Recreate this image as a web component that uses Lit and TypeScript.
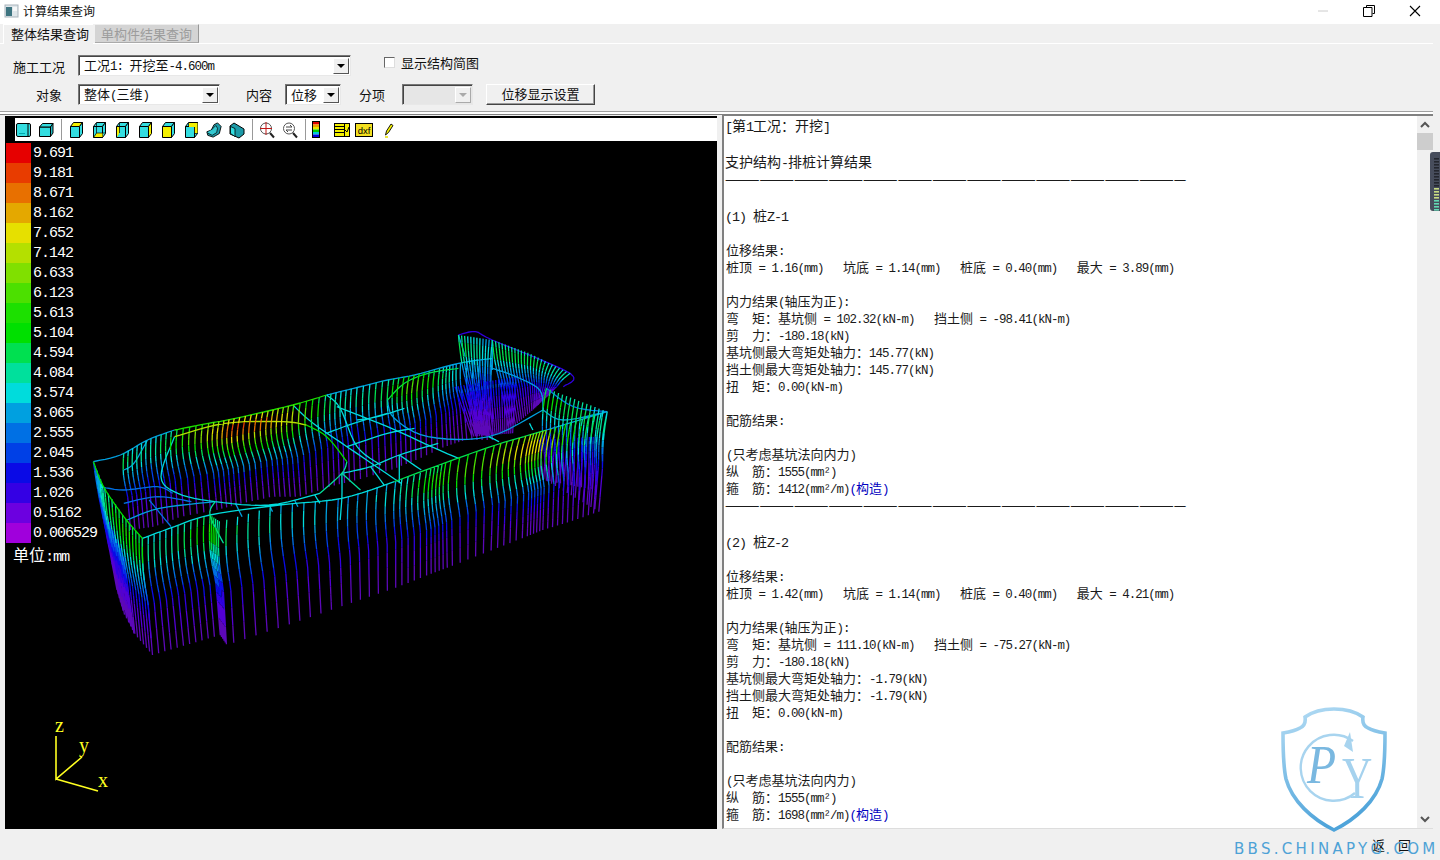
import { LitElement, html, svg, css } from "lit";
import { customElement } from "lit/decorators.js";

const RAMP = ["#a000dc", "#6c00e0", "#3400e4", "#0a0ae6", "#0040e6", "#0070e4", "#00a0e0", "#00dcdc", "#00e09c", "#00e050", "#00e000", "#1ce000", "#4ce000", "#80e000", "#b4e000", "#e6e000", "#e4a800", "#e87000", "#e83c00", "#e60000"];
// the model's thin lines read darker at the low end than the legend swatches
const WIRE_RAMP = ["#5c08b8", "#5200d4", "#3000e0", ...RAMP.slice(3)];
const LEGEND = ["9.691", "9.181", "8.671", "8.162", "7.652", "7.142", "6.633", "6.123", "5.613", "5.104", "4.594", "4.084", "3.574", "3.065", "2.555", "2.045", "1.536", "1.026", "0.5162", "0.006529"];

// coordinates below were read off the screenshot crop of the model
const X = (x: number) => 90 + x / 2.958;
const Y = (y: number) => 330 + y / 3;

type Station = [number, number, number, number, number];

const WALLS: { n: number; bulge: number; st: Station[] }[] = [
  // near long wall
  { n: 72, bulge: 15, st: [[155, 625, 185, 975, .42], [250, 590, 285, 945, .48], [355, 555, 385, 915, .6], [385, 575, 405, 945, .5], [560, 525, 585, 885, .42], [745, 505, 755, 825, .34], [900, 455, 900, 775, .38], [1000, 420, 1000, 735, .58], [1060, 395, 1065, 710, .62], [1200, 345, 1190, 660, .72], [1300, 315, 1290, 620, .88], [1350, 300, 1340, 600, .82], [1430, 275, 1420, 575, .56], [1530, 245, 1505, 545, .46]] },
  // far long wall
  { n: 70, bulge: 13, st: [[100, 370, 120, 600, .5], [170, 330, 190, 590, .42], [250, 300, 270, 560, .56], [350, 280, 375, 540, .78], [430, 265, 450, 520, 1], [520, 245, 540, 500, .95], [600, 225, 620, 500, .8], [700, 195, 710, 470, .5], [780, 175, 790, 450, .42], [880, 150, 890, 420, .52], [960, 135, 965, 390, .7], [1040, 115, 1050, 350, .5], [1090, 100, 1110, 330, .36], [1190, 85, 1190, 330, .32]] },
  // left end
  { n: 18, bulge: 10, st: [[10, 395, 80, 780, .28], [40, 470, 100, 850, .5], [100, 560, 135, 915, .6], [155, 625, 185, 975, .56]] },
  { n: 14, bulge: 3, st: [[30, 510, 80, 780, .22], [100, 680, 130, 910, .22]] },
  // raised notch at the far end
  { n: 12, bulge: 8, st: [[1090, 15, 1140, 310, .52], [1190, 30, 1180, 320, .38]] },
  { n: 24, bulge: 8, st: [[1190, 30, 1240, 300, .5], [1300, 70, 1310, 240, .5], [1420, 130, 1350, 200, .44]] },
  { n: 22, bulge: 2, st: [[1080, 170, 1130, 320, .2], [1260, 140, 1250, 310, .2]] },
  // right end
  { n: 16, bulge: 9, st: [[1350, 175, 1330, 440, .56], [1530, 245, 1505, 545, .46]] },
  { n: 16, bulge: 2, st: [[1330, 330, 1340, 450, .2], [1500, 320, 1495, 480, .2]] },
];

const CURVES: [number, number[][]][] = [
  // near top edge
  [.38, [[155, 625], [250, 590], [355, 555], [560, 525], [745, 505], [900, 455]]],
  [.45, [[900, 455], [1060, 395], [1200, 345], [1350, 300]]],
  [.3, [[1350, 300], [1530, 245]]],
  // far top edge
  [.3, [[10, 395], [90, 375], [170, 330], [250, 300]]],
  [.58, [[250, 300], [350, 280], [430, 265], [600, 225], [700, 195]]],
  [.34, [[700, 195], [780, 175], [880, 150], [960, 135], [1090, 100], [1190, 85]]],
  // first ring
  [.72, [[250, 320], [400, 280], [570, 275], [640, 285]]],
  [.5, [[640, 285], [700, 320], [760, 395]]],
  [.44, [[760, 395], [745, 430], [680, 490]]],
  [.36, [[680, 490], [530, 525], [370, 515], [260, 490], [210, 440], [250, 320]]],
  // second ring
  [.34, [[880, 210], [900, 265], [1000, 320], [1180, 320], [1340, 240]]],
  [.48, [[880, 210], [930, 160], [1000, 130], [1090, 115]]],
  [.34, [[1340, 240], [1330, 180], [1260, 140], [1190, 115]]],
  // slab grid
  [.38, [[600, 225], [660, 280], [760, 350], [920, 460]]],
  [.36, [[730, 230], [880, 290], [1010, 350], [1090, 385]]],
  [.38, [[700, 310], [780, 280], [880, 250]]],
  [.38, [[760, 350], [880, 310], [960, 295]]],
  [.38, [[745, 430], [830, 410], [915, 375], [1030, 340]]],
  [.42, [[745, 430], [800, 480]]],
  [.37, [[830, 410], [870, 465]]],
  [.38, [[915, 375], [915, 460]]],
  [.36, [[915, 375], [980, 420]]],
  [.37, [[700, 195], [740, 235], [790, 350], [860, 405]]],
  [.36, [[790, 270], [850, 260], [930, 235]]],
  [.38, [[745, 430], [745, 500], [740, 570]]],
  [.24, [[30, 470], [100, 480], [200, 470], [245, 490]]],
  [.24, [[100, 520], [200, 500], [300, 515]]],
  [.3, [[110, 570], [205, 535], [370, 515]]],
  [.26, [[175, 510], [240, 590]]],
  [.4, [[370, 515], [355, 555], [395, 640]]],
  [.3, [[430, 520], [450, 560]]],
  [.3, [[530, 525], [540, 545]]],
  [.34, [[605, 510], [615, 530]]],
  [.36, [[665, 495], [680, 520]]],
  [.36, [[1180, 320], [1210, 335]]],
  [.36, [[1300, 280], [1310, 300]]],
  [.34, [[1340, 240], [1400, 270], [1530, 245]]],
  [.28, [[1350, 175], [1430, 230], [1530, 245]]],
  [.52, [[10, 395], [40, 470], [100, 560], [155, 625]]],
  [.34, [[100, 420], [130, 400], [170, 330]]],
  // notch outline
  [.1, [[1090, 15], [1140, 5], [1190, 30], [1420, 130], [1400, 170]]],
  [.3, [[1190, 30], [1190, 120]]],
  [.34, [[1090, 15], [1110, 80]]],
];

function bucket(v: number) {
  return Math.max(0, Math.min(RAMP.length - 1, Math.round(v * (RAMP.length - 1))));
}

function buildWire() {
  const paths: string[] = RAMP.map(() => "");
  const seg = (v: number, x1: number, y1: number, x2: number, y2: number) => {
    paths[bucket(v)] += `M${X(x1).toFixed(1)} ${Y(y1).toFixed(1)}L${X(x2).toFixed(1)} ${Y(y2).toFixed(1)}`;
  };
  for (const w of WALLS) {
    for (let i = 0; i < w.n; i++) {
      const f = (i / (w.n - 1)) * (w.st.length - 1);
      const k = Math.min(Math.floor(f), w.st.length - 2);
      const u = f - k;
      const a = w.st[k].map((val, j) => val + (w.st[k + 1][j] - val) * u);
      const steps = 14;
      let px = a[0];
      let py = a[1];
      for (let s = 1; s <= steps; s++) {
        const t = s / steps;
        const off = -w.bulge * a[4] * Math.sin(Math.PI * Math.min(t / 0.55, 1));
        const x = a[0] + (a[2] - a[0]) * t + off;
        const y = a[1] + (a[3] - a[1]) * t;
        const mid = t - 0.5 / steps;
        const v = mid < 0.14 ? a[4] * (0.75 + (0.25 * mid) / 0.14) : a[4] * Math.pow(1 - (mid - 0.14) / 0.86, 1.8);
        seg(v, px, py, x, y);
        px = x;
        py = y;
      }
    }
  }
  for (const [v, pts] of CURVES) {
    for (let i = 0; i < pts.length - 1; i++) {
      const p0 = pts[Math.max(i - 1, 0)];
      const p1 = pts[i];
      const p2 = pts[i + 1];
      const p3 = pts[Math.min(i + 2, pts.length - 1)];
      let lx = p1[0];
      let ly = p1[1];
      for (let s = 1; s <= 6; s++) {
        const t = s / 6;
        const cr = (a: number, b: number, c: number, d: number) =>
          0.5 * (2 * b + (c - a) * t + (2 * a - 5 * b + 4 * c - d) * t * t + (3 * b - a - 3 * c + d) * t * t * t);
        const x = cr(p0[0], p1[0], p2[0], p3[0]);
        const y = cr(p0[1], p1[1], p2[1], p3[1]);
        seg(v, lx, ly, x, y);
        lx = x;
        ly = y;
      }
    }
  }
  return paths;
}

const WIRE = buildWire();

const CY = "#33dde0";
const YL = "#f4f000";

// front / top / side faces of a small cube
function cube(front = CY, top = CY, side = CY, extra = svg``) {
  return svg`<svg class="ic" width="16" height="18" viewBox="0 0 16 18">
    <path d="M2.5 5.5h9v11h-9z" fill="${front}" stroke="#000"/>
    <path d="M2.5 5.5l3-4h9l-3 4z" fill="${top}" stroke="#000"/>
    <path d="M11.5 5.5l3-4v11l-3 4z" fill="${side}" stroke="#000"/>
    ${extra}
  </svg>`;
}

const ICON_GROUPS = [
  [
    svg`<svg class="ic" width="16" height="18" viewBox="0 0 16 18"><rect x="1.5" y="2.5" width="14" height="13" rx="1.5" fill="${CY}" stroke="#000"/><path d="M13 3v12" stroke="#000"/><path d="M4 12.5h6" stroke="#0aa"/></svg>`,
    svg`<svg class="ic" width="16" height="18" viewBox="0 0 16 18"><path d="M1.5 6h11v9.5h-11z" fill="${CY}" stroke="#000"/><path d="M1.5 6l3-3.5h10.5l-2.5 3.5z" fill="${CY}" stroke="#000"/><path d="M12.5 6l2.5-3.5v9.5l-2.5 3.5z" fill="#22b8c0" stroke="#000"/></svg>`,
  ],
  [
    cube(CY, YL, CY),
    cube(CY, CY, CY, svg`<path d="M3 16l3-4h5.5v4z" fill="${YL}"/><path d="M5.5 2v10h9M5.5 12l-3 4.5" stroke="#000" fill="none" stroke-width=".7"/>`),
    cube(CY, CY, CY, svg`<path d="M3 6h2.5v6l-2.5 4z" fill="${YL}"/><path d="M5.5 2v10" stroke="#000" stroke-width=".7"/>`),
    cube(CY, CY, YL),
    cube(YL, CY, CY),
    cube(CY, CY, CY, svg`<path d="M6 2h8.5v10h-3v-6h-5.5z" fill="${YL}"/><path d="M5.5 2v4M11.5 6v6.5h3" stroke="#000" fill="none" stroke-width=".7"/>`),
    svg`<svg class="ic" width="16" height="18" viewBox="0 0 18 18"><path d="M1 11l5-2 3-6 4-2 4 4-2 8-7 4-6-2z" fill="#1c9aa8" stroke="#000"/><path d="M6 9l5-5 2 3-1 5-5 3-6-3" fill="#33c8d0" stroke="#000" stroke-width=".8"/></svg>`,
    svg`<svg class="ic" width="16" height="18" viewBox="0 0 16 18"><path d="M1 5l4-3 10 6v5l-5 4-9-4z" fill="#1c9aa8" stroke="#000"/><path d="M1.5 5.5l4.5 2v8l-4.5-3z" fill="${CY}" stroke="#000" stroke-width=".8"/></svg>`,
  ],
  [
    svg`<svg class="ic" width="16" height="18" viewBox="0 0 16 18"><circle cx="7" cy="7.5" r="5.5" fill="#fff" stroke="#555"/><path d="M7 1v13M1 7.5h12" stroke="#c01818"/><path d="M11 12l4 4.5" stroke="#222" stroke-width="2"/></svg>`,
    svg`<svg class="ic" width="16" height="18" viewBox="0 0 16 18"><circle cx="7" cy="7.5" r="5.5" fill="#fff" stroke="#555"/><path d="M4 6h6l-2-2M10 9H4l2 2" stroke="#444" fill="none"/><path d="M11 12l4 4.5" stroke="#222" stroke-width="2"/></svg>`,
  ],
];

const BAR_COLORS = ["#e00000", "#f0a000", "#e8e800", "#00d000", "#00c8e0", "#0000e0"];

type Line = { k: string; t?: string; tail?: string };

const RULE = "—".repeat(40);

function pile(no: number, d: string[], m: string[], shear: string, ax: string, stir: string): Line[] {
  return [
    { k: "big", t: `(${no}) 桩Z-${no}` },
    { k: "blank" },
    { k: "sm", t: "位移结果:" },
    { k: "sm", t: `桩顶 = ${d[0]}(mm)   坑底 = ${d[1]}(mm)   桩底 = ${d[2]}(mm)   最大 = ${d[3]}(mm)` },
    { k: "blank" },
    { k: "sm", t: "内力结果(轴压为正):" },
    { k: "sm", t: `弯  矩：基坑侧 = ${m[0]}(kN-m)   挡土侧 = ${m[1]}(kN-m)` },
    { k: "sm", t: `剪  力：${shear}(kN)` },
    { k: "sm", t: `基坑侧最大弯矩处轴力：${ax}(kN)` },
    { k: "sm", t: `挡土侧最大弯矩处轴力：${ax}(kN)` },
    { k: "sm", t: "扭  矩：0.00(kN-m)" },
    { k: "blank" },
    { k: "sm", t: "配筋结果:" },
    { k: "blank" },
    { k: "sm", t: "(只考虑基坑法向内力)" },
    { k: "sm", t: "纵  筋：1555(mm²)" },
    { k: "sm", t: `箍  筋：${stir}(mm²/m)`, tail: "(构造)" },
  ];
}

const LINES: Line[] = [
  { k: "big", t: "[第1工况：开挖]" },
  { k: "blank18" },
  { k: "big", t: "支护结构-排桩计算结果" },
  { k: "rule", t: RULE },
  { k: "blank19" },
  ...pile(1, ["1.16", "1.14", "0.40", "3.89"], ["102.32", "-98.41"], "-180.18", "145.77", "1412"),
  { k: "rule", t: RULE },
  { k: "blank19" },
  ...pile(2, ["1.42", "1.14", "0.40", "4.21"], ["111.10", "-75.27"], "-180.18", "-1.79", "1698"),
];

// latin runs are half the CJK width, as in the bitmap font of the original
function mixed(s: string) {
  return s.split(/([\x20-\x7e²]+)/).map((part, i) => (i % 2 ? html`<span class="l">${part}</span>` : part));
}

@customElement("app-root")
export class AppRoot extends LitElement {
  static styles = css`
    :host {
      display: block;
      position: relative;
      width: 1440px;
      height: 860px;
      overflow: hidden;
      background: #f0f0f0;
      font-family: "Noto Sans CJK SC", "Liberation Sans", sans-serif;
      font-size: 13px;
      color: #111;
    }
    .l {
      font-family: "Liberation Mono", monospace;
      font-size: 0.96em;
      letter-spacing: -0.0792em;
    }
    .title {
      display: flex;
      align-items: center;
      height: 24px;
      padding: 0 0 3px 3px;
      box-sizing: border-box;
      background: #fff;
      font-size: 12px;
    }
    .title .app-ic { margin-right: 4px; }
    .title .name { flex: 1; }
    .win { display: flex; margin-right: 2px; }
    .win div { width: 46px; display: flex; justify-content: center; }
    .tabs {
      display: flex;
      align-items: flex-start;
      height: 19px;
      padding-left: 3px;
      margin-right: 7px;
      border-bottom: 1px solid #fff;
      box-sizing: content-box;
    }
    .tab {
      height: 19px;
      line-height: 18px;
      white-space: nowrap;
      box-sizing: border-box;
    }
    .tab.on {
      height: 20px;
      width: 90px;
      background: #f0f0f0;
      border-left: 1px solid #fff;
      border-top: 1px solid #fff;
      padding-left: 7px;
    }
    .tab.off {
      margin-left: 2px;
      width: 104px;
      padding-left: 6px;
      color: #9c9c9c;
      background: #d4d4d4;
      border-top: 1px solid #eee;
      border-right: 1px solid #999;
      border-bottom: 1px solid #aaa;
    }
    .form {
      height: 67px;
      box-sizing: border-box;
      padding-top: 11px;
    }
    .row {
      display: flex;
      height: 21px;
      align-items: center;
      white-space: pre;
    }
    .row.one { padding-left: 13px; margin-bottom: 8px; }
    .row.two { padding-left: 36px; }
    .lab-a { width: 65px; margin-top: 1px; }
    .lab-b { width: 42px; }
    .combo {
      display: flex;
      height: 21px;
      box-sizing: border-box;
      align-items: center;
      justify-content: space-between;
      background: #fff;
      border: 1px solid;
      border-color: #777 #e8e8e8 #e8e8e8 #777;
      box-shadow: inset 1px 1px 0 #444;
      padding: 1px 1px 0 5px;
      line-height: 18px;
    }
    .combo.c1 { width: 273px; }
    .combo.c2 { width: 142px; }
    .combo.c3 { width: 56px; }
    .combo.c4 { width: 71px; background: #e6e6e6; }
    .arrow {
      width: 16px;
      height: 16px;
      box-sizing: border-box;
      background: #f0f0f0;
      border: 1px solid;
      border-color: #fff #555 #555 #fff;
      display: flex;
      align-items: center;
      justify-content: center;
    }
    .arrow i {
      border: 4px solid transparent;
      border-top: 4px solid #000;
      border-bottom: 0;
      width: 0;
      height: 0;
    }
    .c4 .arrow { border-color: #fff #aaa #aaa #fff; }
    .c4 .arrow i { border-top-color: #aaa; }
    .lab-c { margin-left: 26px; width: 39px; }
    .lab-d { margin-left: 18px; width: 43px; }
    .check {
      width: 11px;
      height: 11px;
      box-sizing: border-box;
      margin: -6px 6px 0 33px;
      background: #fff;
      border: 1px solid;
      border-color: #666 #ddd #ddd #666;
    }
    .check-t { margin-top: -7px; }
    .btn {
      margin-left: 13px;
      width: 109px;
      height: 21px;
      box-sizing: border-box;
      text-align: center;
      line-height: 18px;
      background: #f0f0f0;
      border: 1px solid;
      border-color: #fff #444 #444 #fff;
      box-shadow: inset -1px -1px 0 #999;
    }
    .sep {
      height: 4px;
      box-sizing: border-box;
      margin-right: 7px;
      border-top: 1px solid #a0a0a0;
      border-bottom: 1px solid #808080;
      background: #fff;
    }
    .main {
      display: flex;
      height: 714px;
      padding-left: 5px;
      box-sizing: border-box;
    }
    .view {
      position: relative;
      width: 712px;
      margin-top: 1px;
      height: 713px;
      background: #000;
      overflow: hidden;
      padding-top: 2px;
      box-sizing: border-box;
    }
    .view > svg.wire {
      position: absolute;
      left: 0;
      top: 0;
    }
    .tools {
      position: relative;
      display: flex;
      align-items: center;
      height: 23px;
      margin-left: 10px;
      background: #fff;
    }
    .tools .grp { display: flex; gap: 7px; align-items: center; }
    .tools .bar-sep {
      width: 1px;
      height: 21px;
      margin: 0 6px 0 7px;
      background: #999;
    }
    .ic { display: block; flex: none; }
    .tools .end { margin-left: 14px; gap: 5px; }
    .tools .end .pen { margin-left: 6px; }
    .tools .colorbar { margin-left: 0; }
    .legend {
      position: relative;
      margin: 2px 0 0 1px;
    }
    .lg {
      display: flex;
      height: 20px;
      align-items: center;
    }
    .lg b {
      width: 25px;
      height: 20px;
      margin-right: 2px;
      flex: none;
    }
    .lg span {
      color: #fff;
      font-family: "Liberation Mono", monospace;
      font-size: 15px;
      letter-spacing: -1px;
      padding-top: 1px;
    }
    .unit {
      position: relative;
      color: #fff;
      font-size: 16px;
      line-height: 22px;
      margin-left: 8px;
    }
    .axis {
      font-family: "Liberation Serif", serif;
      font-size: 20px;
      fill: #ffff20;
    }
    .result {
      flex: 1;
      display: flex;
      margin: 0 7px 0 5px;
      background: #fff;
      border-left: 2px solid #808080;
      border-top: 1px solid #808080;
      border-bottom: 1px solid #ddd;
      overflow: hidden;
    }
    .text {
      flex: 1;
      padding: 0 0 0 1px;
      overflow: hidden;
      color: #1a1a1a;
    }
    .big { height: 18px; line-height: 18px; font-size: 14px; white-space: pre; }
    .sm { height: 17px; line-height: 17px; font-size: 13px; padding-left: 1px; white-space: pre; }
    .rule { height: 17px; line-height: 16px; font-size: 14px; letter-spacing: 0.1px; white-space: pre; }
    .blank { height: 17px; }
    .blank18 { height: 18px; }
    .blank19 { height: 19px; }
    .blue { color: #0000c0; }
    .vs {
      width: 16px;
      flex: none;
      background: #f0f0f0;
      display: flex;
      flex-direction: column;
      align-items: center;
    }
    .vs .up { height: 17px; display: flex; align-items: center; }
    .vs .thumb { width: 100%; height: 17px; background: #cdcdcd; }
    .vs .gap { flex: 1; }
    .vs .down { height: 17px; display: flex; align-items: center; }
    .status {
      display: flex;
      justify-content: flex-end;
      gap: 13px;
      padding: 7px 29px 0 0;
      height: 31px;
      box-sizing: border-box;
      line-height: 18px;
    }
    /* things floating above the window */
    .gadget {
      position: absolute;
      left: 1430px;
      top: 152px;
    }
    .logo {
      position: absolute;
      left: 1280px;
      top: 705px;
    }
    .logo text { font-family: "Liberation Serif", serif; }
    .mark {
      position: absolute;
      left: 1234px;
      top: 840px;
      color: #4ea2d6;
      font-family: "DejaVu Sans", sans-serif;
      font-size: 15px;
      line-height: 18px;
      letter-spacing: 3.3px;
      white-space: nowrap;
    }
  `;

  render() {
    const gadgetBars = Array.from({ length: 18 }, (_, i) => i);
    return html`
      <div class="title">
        <svg class="app-ic" width="16" height="16" viewBox="0 0 16 16">
          <rect x="2" y="2" width="13" height="12" fill="#dfe6ea" stroke="#a9b4bb"/>
          <rect x="3" y="4" width="6" height="9" fill="#3d7480"/>
          <rect x="10" y="4" width="4" height="4" fill="#f5f7f8"/>
        </svg>
        <span class="name">计算结果查询</span>
        <div class="win">
          <div><svg width="14" height="14" viewBox="0 0 14 14"><path d="M2 7h10" stroke="#ccc"/></svg></div>
          <div><svg width="14" height="14" viewBox="0 0 14 14"><path d="M4.5 3V1.5h8v8H10.5" fill="none" stroke="#000"/><path d="M1.5 3.5h8.5v9h-8.5z" fill="#fff" stroke="#000"/></svg></div>
          <div><svg width="14" height="14" viewBox="0 0 14 14"><path d="M2 2l10 10M12 2L2 12" stroke="#000" stroke-width="1.1"/></svg></div>
        </div>
      </div>
      <div class="tabs">
        <div class="tab on">整体结果查询</div>
        <div class="tab off">单构件结果查询</div>
      </div>
      <div class="form">
        <div class="row one">
          <span class="lab-a">施工工况</span>
          <div class="combo c1"><span>${mixed("工况1: 开挖至-4.600m")}</span><div class="arrow"><i></i></div></div>
          <div class="check"></div>
          <span class="check-t">显示结构简图</span>
        </div>
        <div class="row two">
          <span class="lab-b">对象</span>
          <div class="combo c2"><span>${mixed("整体(三维)")}</span><div class="arrow"><i></i></div></div>
          <span class="lab-c">内容</span>
          <div class="combo c3"><span>位移</span><div class="arrow"><i></i></div></div>
          <span class="lab-d">分项</span>
          <div class="combo c4"><span></span><div class="arrow"><i></i></div></div>
          <div class="btn">位移显示设置</div>
        </div>
      </div>
      <div class="sep"></div>
      <div class="main">
        <div class="view">
          <svg class="wire" width="712" height="713" viewBox="5 116 712 713">
            <g fill="none" stroke-width="1.3">
              ${WIRE.map((d, i) => svg`<path d="${d}" stroke="${WIRE_RAMP[i]}"/>`)}
            </g>
            <path d="M56 736V779L82 757M56 779L98 791" fill="none" stroke="#ffff20" stroke-width="1.6"/>
            <text class="axis" x="55" y="732">z</text>
            <text class="axis" x="79" y="752">y</text>
            <text class="axis" x="98" y="787">x</text>
          </svg>
          <div class="tools">
            <div class="grp">${ICON_GROUPS[0]}</div>
            <div class="bar-sep"></div>
            <div class="grp">${ICON_GROUPS[1]}</div>
            <div class="bar-sep"></div>
            <div class="grp">${ICON_GROUPS[2]}</div>
            <div class="bar-sep"></div>
            <svg class="ic colorbar" width="8" height="17" viewBox="0 0 8 17">
              <rect x=".5" y=".5" width="7" height="16" fill="none" stroke="#000"/>
              ${BAR_COLORS.map((c, i) => svg`<rect x="1" y="${1 + i * 2.5}" width="6" height="2.5" fill="${c}"/>`)}
            </svg>
            <div class="grp end">
              <svg class="ic" width="16" height="16" viewBox="0 0 16 16">
                <rect x=".5" y="1.5" width="15" height="13" fill="${YL}" stroke="#000"/>
                <path d="M1 4.5h9M1 7.5h9M1 10.5h9M10.5 2v12" stroke="#000"/>
                <path d="M11 8l2 2 2-5" fill="none" stroke="#000"/>
              </svg>
              <svg class="ic" width="18" height="14" viewBox="0 0 18 14">
                <rect x=".5" y=".5" width="17" height="13" fill="#f4e020" stroke="#000"/>
                <text x="9" y="10.5" text-anchor="middle" font-family="Liberation Sans" font-size="9.5" fill="#000">dxf</text>
              </svg>
              <svg class="ic pen" width="10" height="16" viewBox="0 0 10 16">
                <path d="M1.5 13l1-4 4.5-7 2 1.5-4.5 7z" fill="${YL}" stroke="#000" stroke-width=".9"/>
                <path d="M1 15h3" stroke="#e8e000" stroke-width="1.5"/>
              </svg>
            </div>
          </div>
          <div class="legend">
            ${LEGEND.map((v, i) => html`<div class="lg"><b style="background:${RAMP[RAMP.length - 1 - i]}"></b><span>${v}</span></div>`)}
          </div>
          <div class="unit">${mixed("单位:mm")}</div>
        </div>
        <div class="result">
          <div class="text">
            ${LINES.map(
              l => html`<div class="${l.k}">${l.t ? mixed(l.t) : ""}${l.tail ? html`<span class="blue">${mixed(l.tail)}</span>` : ""}</div>`
            )}
          </div>
          <div class="vs">
            <div class="up"><svg width="10" height="7" viewBox="0 0 10 7"><path d="M1 6l4-4 4 4" fill="none" stroke="#555" stroke-width="2"/></svg></div>
            <div class="thumb"></div>
            <div class="gap"></div>
            <div class="down"><svg width="10" height="7" viewBox="0 0 10 7"><path d="M1 1l4 4 4-4" fill="none" stroke="#555" stroke-width="2"/></svg></div>
          </div>
        </div>
      </div>
      <div class="status"><span>返</span><span>回</span></div>

      <svg class="gadget" width="10" height="60" viewBox="0 0 10 60">
        <path d="M10 0H3Q0 0 0 3V56Q0 59 3 59H10z" fill="#474d5c"/>
        ${gadgetBars.map(i => svg`<rect x="4" y="${6 + i * 3}" width="5" height="1.6" fill="${i < 10 ? "#23262e" : i < 14 ? "#c8dc82" : "#62d8b4"}"/>`)}
      </svg>
      <svg class="logo" width="110" height="130" viewBox="0 0 110 130">
        <defs>
          <linearGradient id="sh" x1="0" y1="0" x2="0.3" y2="1">
            <stop offset="0" stop-color="#b4dcf4"/>
            <stop offset="1" stop-color="#4fa4da"/>
          </linearGradient>
        </defs>
        <path d="M54 4C42 4 32 7 25 12C26 18 24 21 20 23C15 26 9 27 3 28C3 45 3 60 6 74C12 96 32 114 54 125C76 114 96 96 102 74C105 60 105 45 105 28C99 27 93 26 88 23C84 21 82 18 83 12C76 7 66 4 54 4Z" fill="#fff" fill-opacity=".35" stroke="url(#sh)" stroke-width="3.6"/>
        <path d="M73 36A33 33 0 1 0 75 88" fill="none" stroke="#a8d4ef" stroke-width="2.4"/>
        <path d="M70 27l3 20-9-6z" fill="#a8d4ef"/>
        <text transform="translate(27 78) scale(.85 1)" font-size="56" font-style="italic" fill="#7ab8e0">P</text>
        <text transform="translate(62 93) scale(.7 1)" font-size="60" fill="#a5d2ee">Y</text>
      </svg>
      <div class="mark">BBS.CHINAPYG.COM</div>
    `;
  }
}
